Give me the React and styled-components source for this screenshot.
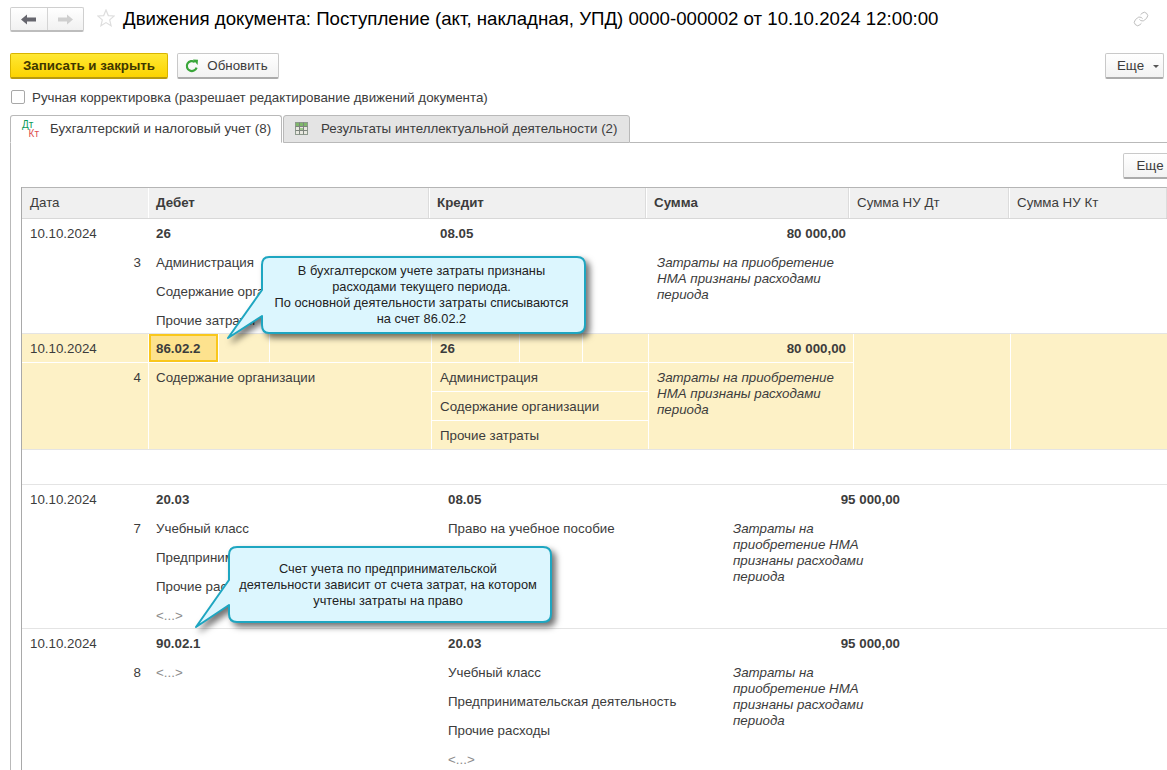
import React from "react";
import styled, { createGlobalStyle } from "styled-components";
import { Link as LinkIcon } from "lucide-react";

const Global = createGlobalStyle`
  html, body { margin: 0; padding: 0; background: #fff; }
  * { box-sizing: border-box; }
`;

const Page = styled.div`
  position: relative;
  width: 1167px;
  height: 770px;
  overflow: hidden;
  font-family: "Liberation Sans", Arial, sans-serif;
  font-size: 13.33px;
  color: #3c3c3c;
  background: #fff;
`;

const TitleBar = styled.div`
  height: 53px;
  padding: 7px 18px 0 10px;
  display: flex;
  align-items: flex-start;
`;
const NavGroup = styled.div`
  display: flex;
  width: 74px;
  height: 25px;
  border: 1px solid #cfcfcf;
  border-bottom: 2px solid #bdbdbd;
  border-radius: 2px;
  background: linear-gradient(#ffffff, #f1f1f1);
`;
const NavButton = styled.div`
  flex: 1;
  display: flex;
  align-items: center;
  justify-content: center;
  & + & { border-left: 1px solid #d4d4d4; }
`;
const StarWrap = styled.div`
  margin: 2px 8px 0 13px;
  height: 20px;
`;
const Title = styled.h1`
  margin: 0;
  font-weight: 400;
  font-size: 18.67px;
  line-height: 24px;
  color: #000;
  white-space: nowrap;
  flex: 1;
`;
const LinkWrap = styled.div`
  color: #adadad;
  margin-top: 4px;
`;

const Toolbar = styled.div`
  height: 26px;
  padding: 0 3px 0 10px;
  display: flex;
  gap: 9px;
`;
const Button = styled.button`
  height: 26px;
  width: ${(p) => p.$w}px;
  padding: 0 ${(p) => p.$pr || 0}px 0 ${(p) => p.$pl || 0}px;
  display: flex;
  align-items: center;
  justify-content: center;
  gap: ${(p) => p.$gap || 6}px;
  font: inherit;
  color: #3c3c3c;
  background: linear-gradient(#ffffff, #f2f2f2);
  border: 1px solid #c9c9c9;
  border-bottom: 2px solid #ababab;
  border-radius: 2px;
  white-space: nowrap;
`;
const PrimaryButton = styled(Button)`
  font-weight: 700;
  color: #3f3700;
  background: linear-gradient(#ffe834, #fcd300);
  border-color: #d8b400;
  border-bottom-color: #b89a10;
`;
const MoreButton = styled(Button)`
  margin-left: auto;
`;
const Caret = styled.span`
  width: 0;
  height: 0;
  margin-top: 2px;
  border-left: 3px solid transparent;
  border-right: 3px solid transparent;
  border-top: 3px solid #555;
`;

const CheckRow = styled.label`
  margin: 9px 0 0 11px;
  height: 18px;
  display: flex;
  align-items: center;
  gap: 7px;
  white-space: nowrap;
`;
const CheckBox = styled.span`
  width: 14px;
  height: 14px;
  border: 1px solid #a8a8a8;
  border-radius: 2px;
  background: #fff;
`;

const TabBar = styled.div`
  margin-top: 9px;
  height: 28px;
  padding-left: 10px;
  display: flex;
`;
const Tab = styled.div`
  width: ${(p) => p.$w}px;
  margin-left: ${(p) => (p.$active ? 0 : 1)}px;
  display: flex;
  align-items: center;
  white-space: nowrap;
  padding: 0 0 1px 11px;
  gap: ${(p) => (p.$active ? 11 : 13)}px;
  background: ${(p) => (p.$active ? "#fff" : "#e4e4e4")};
  border: 1px solid #b9b9b9;
  border-bottom: 1px solid ${(p) => (p.$active ? "#fff" : "#b9b9b9")};
  border-radius: 3px 3px 0 0;
`;
const TabRule = styled.div`
  flex: 1;
  border-bottom: 1px solid #b9b9b9;
`;
const DtKt = styled.div`
  width: 17px;
  display: flex;
  flex-direction: column;
  font-size: 10px;
  line-height: 9px;
`;
const Dt = styled.span`
  color: #0c9a58;
`;
const Kt = styled.span`
  color: #de5050;
  align-self: flex-end;
`;

const Panel = styled.div`
  margin-left: 10px;
  height: 627px;
  padding-left: 10px;
  border-left: 1px solid #b9b9b9;
`;
const PanelTools = styled.div`
  padding-top: 10px;
  margin-right: -10px;
  display: flex;
  justify-content: flex-end;
`;
const Table = styled.div`
  margin-top: 8px;
  width: 1146px;
  height: 600px;
  border-left: 1px solid #a9a9a9;
`;
const HeaderRow = styled.div`
  display: grid;
  grid-template-columns: 126px 281px 217px 203px 160px 158px;
  height: 32px;
  border-top: 1px solid #b5b5b5;
  border-bottom: 1px solid #d8d8d8;
  border-right: 1px solid #c4c4c4;
`;
const HeaderCell = styled.div`
  display: flex;
  align-items: center;
  padding: 0 0 2px ${(p) => (p.$first ? 8 : 7)}px;
  background: #f0f0f0;
  font-weight: ${(p) => (p.$bold ? 700 : 400)};
  border-left: ${(p) => (p.$first ? 0 : "1px solid #fff")};
  border-right: ${(p) => (p.$first ? "0" : "1px solid #dcdcdc")};
`;

const Record = styled.div`
  display: grid;
  grid-template-columns: ${(p) => p.$cols};
  height: ${(p) => p.$h}px;
  overflow: hidden;
  background: ${(p) => (p.$hl ? "#fdf1c6" : "#fff")};
  border-bottom: ${(p) => (p.$open ? 0 : "1px solid #e4e4e4")};
`;
const Spacer = styled.div`
  height: 35px;
  border-bottom: 1px solid #e4e4e4;
`;
const Cell = styled.div`
  min-width: 0;
  border-left: ${(p) => (p.$hl ? "1px solid #fff" : "0")};
`;
const Line = styled.div`
  height: 29px;
  display: flex;
  align-items: center;
  padding: 0 ${(p) => (p.$right ? 7 : 0)}px 0 ${(p) => (p.$right ? 0 : p.$tight ? 7 : 8)}px;
  justify-content: ${(p) => (p.$right ? "flex-end" : "flex-start")};
  font-weight: ${(p) => (p.$bold ? 700 : 400)};
  color: ${(p) => (p.$muted ? "#8c8c8c" : "inherit")};
  white-space: nowrap;
  border-top: ${(p) => (p.$sep ? "1px solid #fff" : "0")};
`;
const FirstLine = styled(Line)`
  height: 28px;
`;
const HairLine = styled.div`
  height: 1px;
  margin-top: 0;
  background: #fff;
`;
const HeadSplit = styled.div`
  height: 28px;
  display: flex;
`;
const SplitCell = styled.div`
  width: ${(p) => (p.$w ? `${p.$w}px` : "auto")};
  flex: ${(p) => (p.$w ? "none" : 1)};
  display: flex;
  align-items: center;
  padding-left: 8px;
  font-weight: 700;
  & + & { border-left: 1px solid #fff; }
`;
const Selected = styled(SplitCell)`
  background: #fde28e;
  border: 2px solid #f9c71c;
  padding-left: 5px;
`;
const Comment = styled.div`
  padding: 0 4px 0 8px;
  margin-top: 7px;
  font-style: italic;
  line-height: 16px;
  white-space: nowrap;
`;
const Num = styled(Line)`
  justify-content: flex-end;
  padding: 0 7px 0 0;
`;

const Callout = styled.div`
  position: absolute;
  left: ${(p) => p.$x}px;
  top: ${(p) => p.$y}px;
  width: ${(p) => p.$w}px;
  height: ${(p) => p.$h}px;
  font-size: 12.8px;
  line-height: 16px;
  color: #222;
  text-align: center;
`;
const CalloutShape = styled.svg`
  position: absolute;
  inset: 0;
  overflow: visible;
  filter: drop-shadow(4px 4px 3px rgba(0, 0, 0, 0.55));
`;
const CalloutText = styled.div`
  position: relative;
  margin-left: ${(p) => p.$ml}px;
  width: ${(p) => p.$tw}px;
  padding-top: ${(p) => p.$pt}px;
  white-space: nowrap;
`;

const ArrowBack = ({ color, flip }) => (
  <svg width="15" height="11" viewBox="0 0 15 11" style={flip ? { transform: "scaleX(-1)" } : undefined}>
    <path d="M0 5.5 L6 0.5 V3.5 H15 V7.5 H6 V10.5 Z" fill={color} />
  </svg>
);
const Star = () => (
  <svg width="18" height="18" viewBox="0 0 18 18">
    <path d="M9 1 L11.3 6.6 L17.2 7 L12.7 10.9 L14.1 16.8 L9 13.6 L3.9 16.8 L5.3 10.9 L0.8 7 L6.7 6.6 Z" fill="#fff" stroke="#dedede" strokeWidth="1.2" />
  </svg>
);
const Refresh = () => (
  <svg width="14" height="14" viewBox="0 0 14 14" fill="none">
    <path d="M11.6 8.6 A5 5 0 1 1 9.8 3" stroke="#3aa63a" strokeWidth="2.2" />
    <path d="M8 0.6 L13 0.8 L12.6 6 Z" fill="#3aa63a" />
  </svg>
);
const GridIcon = () => (
  <svg width="13" height="13" viewBox="0 0 13 13">
    <rect x="0.5" y="0.5" width="12" height="12" fill="#e8e8e0" stroke="#8d9a8d" />
    <rect x="1" y="1" width="11" height="3" fill="#7fb86a" />
    <rect x="4.5" y="6" width="4" height="2.5" fill="#9ccb8a" />
    <path d="M4.5 0.5V12.5M8.5 0.5V12.5M0.5 4.5H12.5M0.5 8.5H12.5" stroke="#7d857d" strokeWidth="1" />
  </svg>
);

const BalloonPath = ({ path }) => (
  <CalloutShape width="100%" height="100%">
    <path d={path} fill="#dcf6fe" stroke="#1ea6c1" strokeWidth="2" strokeLinejoin="round" />
  </CalloutShape>
);

const COLS_TOP = "126px 284px 217px 204px 157px 157px";
const COLS_HL = "126px 283px 217px 205px 157px 157px";
const COLS_LOW = "126px 292px 285px 182px 100px 100px";
const COMMENT_WIDE = <>Затраты на приобретение<br />НМА признаны расходами<br />периода</>;
const COMMENT_NARROW = <>Затраты на<br />приобретение НМА<br />признаны расходами<br />периода</>;

export default function App() {
  return (
    <Page>
      <Global />
      <TitleBar>
        <NavGroup>
          <NavButton><ArrowBack color="#66666e" /></NavButton>
          <NavButton><ArrowBack color="#cfcfcf" flip /></NavButton>
        </NavGroup>
        <StarWrap><Star /></StarWrap>
        <Title>Движения документа: Поступление (акт, накладная, УПД) 0000-000002 от 10.10.2024 12:00:00</Title>
        <LinkWrap><LinkIcon size={16} strokeWidth={1.2} /></LinkWrap>
      </TitleBar>

      <Toolbar>
        <PrimaryButton $w={158}>Записать и закрыть</PrimaryButton>
        <Button $w={102} $gap={8} $pr={3}><Refresh />Обновить</Button>
        <MoreButton $w={59} $gap={9} $pl={7}>Еще <Caret /></MoreButton>
      </Toolbar>

      <CheckRow>
        <CheckBox />
        Ручная корректировка (разрешает редактирование движений документа)
      </CheckRow>

      <TabBar>
        <Tab $active $w={272}>
          <DtKt><Dt>Дт</Dt><Kt>Кт</Kt></DtKt>
          Бухгалтерский и налоговый учет (8)
        </Tab>
        <Tab $w={347}>
          <GridIcon />
          Результаты интеллектуальной деятельности (2)
        </Tab>
        <TabRule />
      </TabBar>

      <Panel>
        <PanelTools>
          <Button $w={54}>Еще</Button>
        </PanelTools>
        <Table>
          <HeaderRow>
            <HeaderCell $first>Дата</HeaderCell>
            <HeaderCell $bold>Дебет</HeaderCell>
            <HeaderCell $bold>Кредит</HeaderCell>
            <HeaderCell $bold>Сумма</HeaderCell>
            <HeaderCell>Сумма НУ Дт</HeaderCell>
            <HeaderCell>Сумма НУ Кт</HeaderCell>
          </HeaderRow>

          <Record $cols={COLS_TOP} $h={115}>
            <Cell>
              <Line>10.10.2024</Line>
              <Num>3</Num>
            </Cell>
            <Cell>
              <Line $bold>26</Line>
              <Line>Администрация</Line>
              <Line>Содержание организации</Line>
              <Line>Прочие затраты</Line>
            </Cell>
            <Cell>
              <Line $bold>08.05</Line>
            </Cell>
            <Cell>
              <Line $bold $right>80 000,00</Line>
              <Comment>{COMMENT_WIDE}</Comment>
            </Cell>
            <Cell />
            <Cell />
          </Record>

          <Record $cols={COLS_HL} $h={116} $hl>
            <Cell>
              <FirstLine>10.10.2024</FirstLine>
              <Num $sep>4</Num>
            </Cell>
            <Cell $hl>
              <HeadSplit>
                <Selected $w={69}>86.02.2</Selected>
                <SplitCell $w={51} />
                <SplitCell />
              </HeadSplit>
              <Line $sep $tight>Содержание организации</Line>
            </Cell>
            <Cell $hl>
              <HeadSplit>
                <SplitCell $w={87}>26</SplitCell>
                <SplitCell $w={63} />
                <SplitCell />
              </HeadSplit>
              <Line $sep>Администрация</Line>
              <Line $sep>Содержание организации</Line>
              <Line $sep>Прочие затраты</Line>
            </Cell>
            <Cell $hl>
              <FirstLine $bold $right>80 000,00</FirstLine>
              <HairLine />
              <Comment>{COMMENT_WIDE}</Comment>
            </Cell>
            <Cell $hl />
            <Cell $hl />
          </Record>

          <Spacer />

          <Record $cols={COLS_LOW} $h={144}>
            <Cell>
              <Line>10.10.2024</Line>
              <Num>7</Num>
            </Cell>
            <Cell>
              <Line $bold>20.03</Line>
              <Line>Учебный класс</Line>
              <Line>Предпринимательская деятельность</Line>
              <Line>Прочие расходы</Line>
              <Line $muted>&lt;...&gt;</Line>
            </Cell>
            <Cell>
              <Line $bold>08.05</Line>
              <Line>Право на учебное пособие</Line>
            </Cell>
            <Cell>
              <Line $bold $right>95 000,00</Line>
              <Comment>{COMMENT_NARROW}</Comment>
            </Cell>
            <Cell />
            <Cell />
          </Record>

          <Record $cols={COLS_LOW} $h={145} $open>
            <Cell>
              <Line>10.10.2024</Line>
              <Num>8</Num>
            </Cell>
            <Cell>
              <Line $bold>90.02.1</Line>
              <Line $muted>&lt;...&gt;</Line>
            </Cell>
            <Cell>
              <Line $bold>20.03</Line>
              <Line>Учебный класс</Line>
              <Line>Предпринимательская деятельность</Line>
              <Line>Прочие расходы</Line>
              <Line $muted>&lt;...&gt;</Line>
            </Cell>
            <Cell>
              <Line $bold $right>95 000,00</Line>
              <Comment>{COMMENT_NARROW}</Comment>
            </Cell>
            <Cell />
            <Cell />
          </Record>
        </Table>
      </Panel>

      <Callout $x={227} $y={256} $w={359} $h={83}>
        <BalloonPath path="M42 1 H350 Q358 1 358 9 V69 Q358 77 350 77 H42 Q35 77 35 69 V60 L1 82 L35 34 V9 Q35 1 42 1 Z" />
        <CalloutText $ml={35} $tw={319} $pt={7}>
          В бухгалтерском учете затраты признаны<br />
          расходами текущего периода.<br />
          По основной деятельности затраты списываются<br />
          на счет 86.02.2
        </CalloutText>
      </Callout>

      <Callout $x={195} $y={546} $w={357} $h={82}>
        <BalloonPath path="M42 1 H348 Q356 1 356 9 V68 Q356 76 348 76 H42 Q34 76 34 68 V59 L1 81 L34 34 V9 Q34 1 42 1 Z" />
        <CalloutText $ml={34} $tw={318} $pt={15}>
          Счет учета по предпринимательской<br />
          деятельности зависит от счета затрат, на котором<br />
          учтены затраты на право
        </CalloutText>
      </Callout>
    </Page>
  );
}
